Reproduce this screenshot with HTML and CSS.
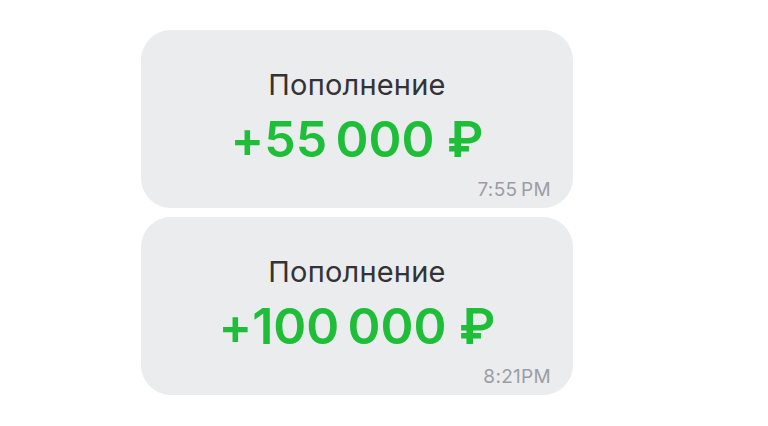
FILE: index.html
```html
<!DOCTYPE html>
<html lang="ru">
<head>
<meta charset="utf-8">
<link rel="stylesheet" href="styles.css">
</head>
<body>
<div class="chat">
  <div class="bubble">
    <div class="title">Пополнение</div>
    <div class="amount">+55&#8239;000&nbsp;₽</div>
    <div class="time">7:55&#8201;PM</div>
  </div>
  <div class="bubble">
    <div class="title">Пополнение</div>
    <div class="amount">+100&#8239;000&nbsp;₽</div>
    <div class="time">8:21PM</div>
  </div>
</div>
</body>
</html>
```
FILE: styles.css
```css
html, body {
  margin: 0;
  padding: 0;
  background: #ffffff;
}
body {
  font-family: Inter, "Noto Sans", "Liberation Sans", sans-serif;
}
.chat {
  display: flex;
  flex-direction: column;
  gap: 9px;
  padding: 30px 0 0 141px;
}
.bubble {
  width: 432px;
  height: 178px;
  box-sizing: border-box;
  background: #ebecee;
  border-radius: 30px;
  display: flex;
  flex-direction: column;
  align-items: center;
  padding: 38px 22px 0 22px;
}
.title {
  font-size: 29px;
  line-height: 34px;
  color: #333336;
  font-weight: 400;
  letter-spacing: 0.2px;
}
.amount {
  margin-top: 11px;
  font-size: 50px;
  line-height: 52px;
  font-weight: 600;
  color: #1fbe38;
  letter-spacing: -2px;
}
.time {
  align-self: flex-end;
  margin-top: 15px;
  font-size: 19px;
  line-height: 20px;
  color: #9b9da4;
  letter-spacing: 0.3px;
}
```
